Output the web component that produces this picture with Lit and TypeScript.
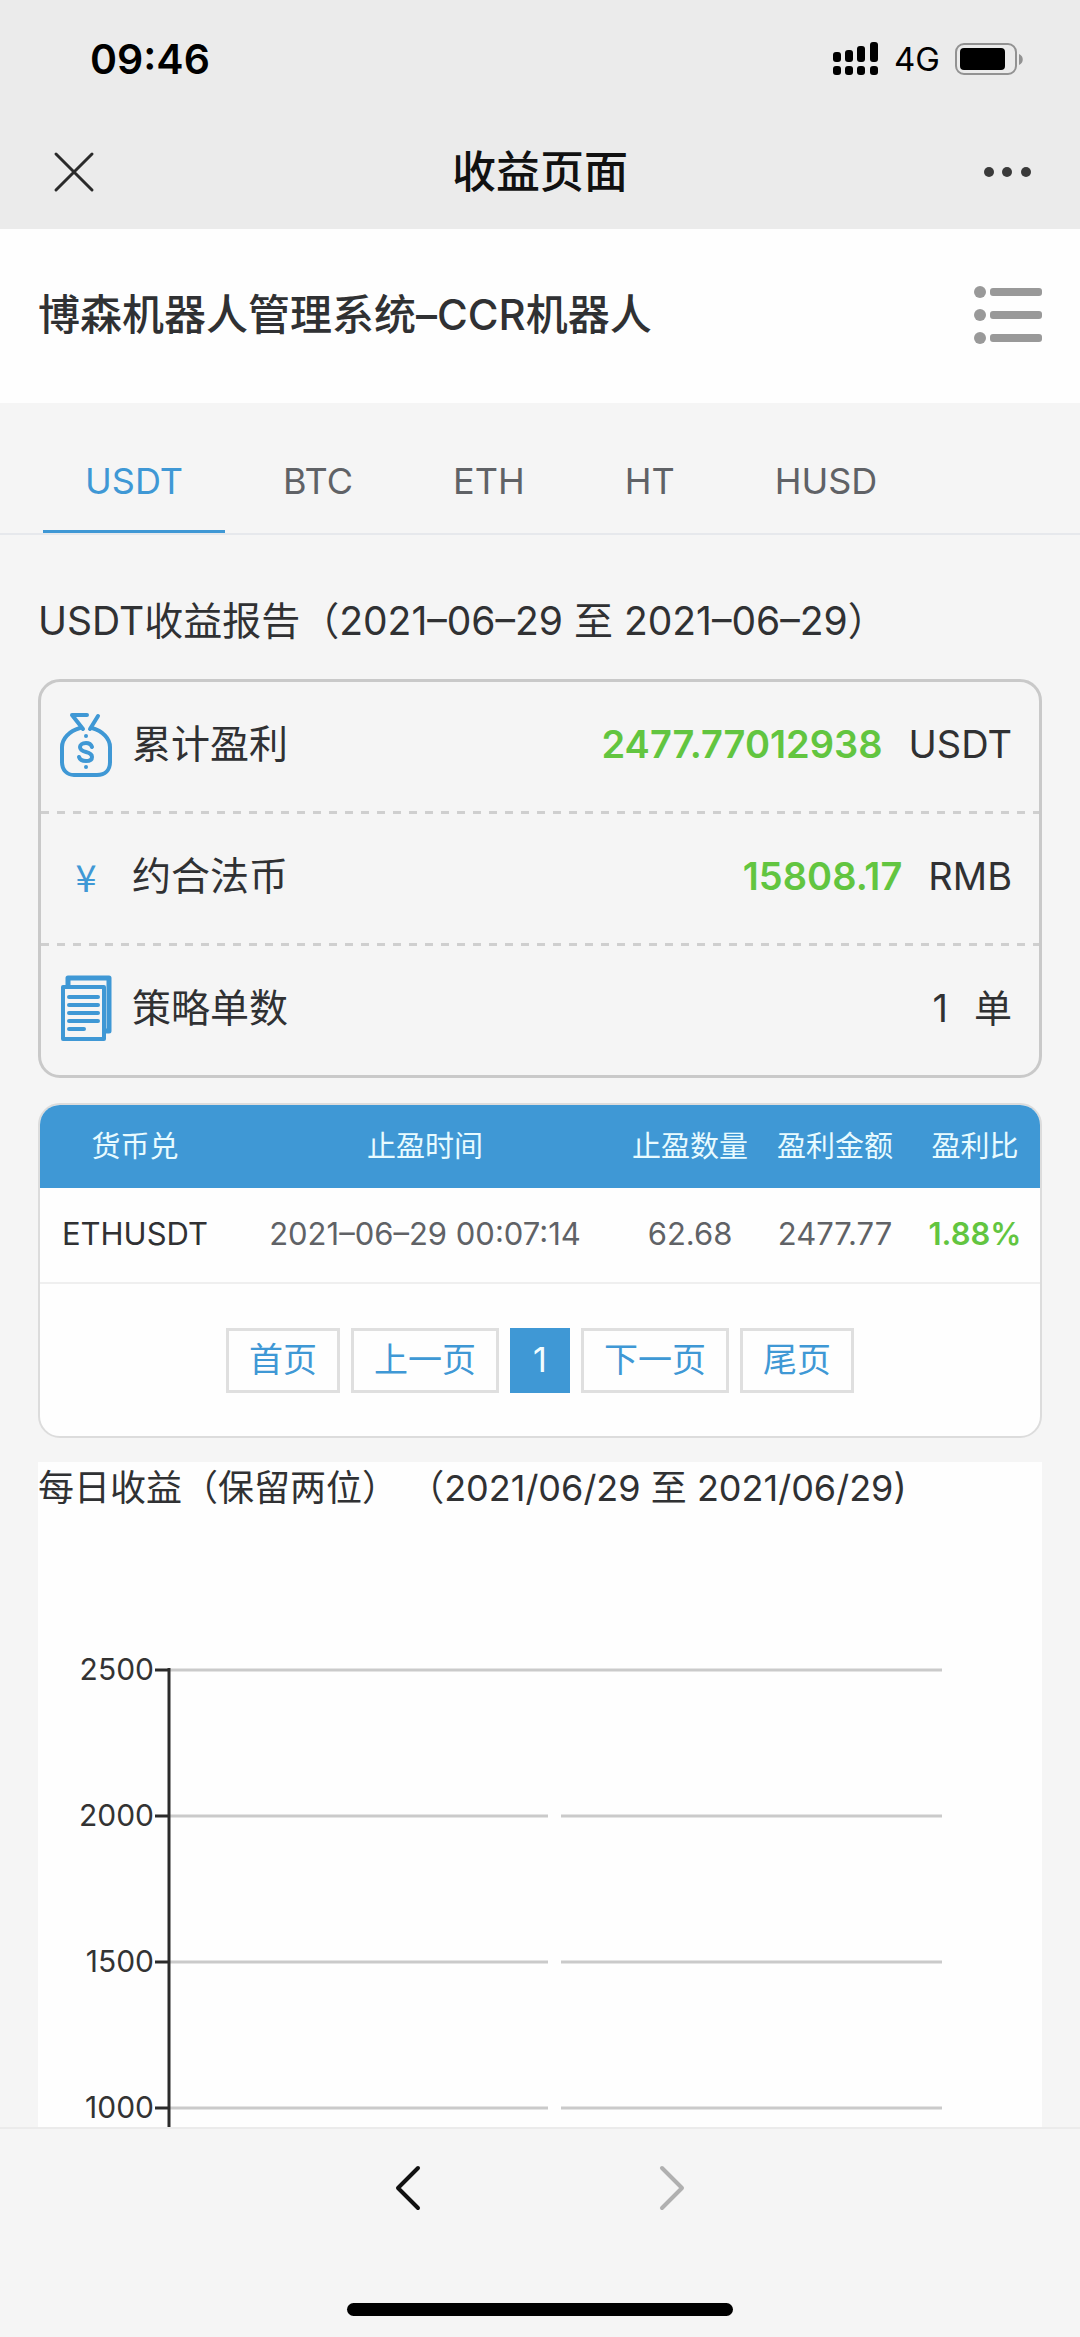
import { LitElement, html, css, svg } from "lit";
import { customElement, state } from "lit/decorators.js";
import { classMap } from "lit/directives/class-map.js";

const COINS = ["USDT", "BTC", "ETH", "HT", "HUSD"];

const bagIcon = svg`
  <svg class="icon" viewBox="0 0 52 66" width="52" height="66" fill="none" stroke="currentColor" stroke-width="4" stroke-linecap="round" stroke-linejoin="round">
    <path d="M27 4H12L23 18M38 5L30 18" />
    <path d="M20 17C9 20 2 28 2 36V51C2 59 7 64 14 64H37C45 64 50 59 50 51V36C50 28 43 20 32 17" />
    <path d="M32 36C31 33 29 32 26 32C22 32 20 34 20 36C20 39 22 40 26 41C30 42 32 43 32 46C32 49 30 50 26 50C22 50 20 49 19 46" />
    <circle cx="26" cy="25" r="2" fill="currentColor" stroke="none" />
    <circle cx="26" cy="56" r="2" fill="currentColor" stroke="none" />
  </svg>`;

const docIcon = svg`
  <svg class="icon" viewBox="0 0 52 66" width="52" height="66" fill="none" stroke="currentColor" stroke-width="4" stroke-linecap="round" stroke-linejoin="round">
    <path d="M8 10V3H49V56H45" stroke-width="5" />
    <rect x="3" y="12" width="41" height="52" />
    <path d="M9 22H38M9 30H38M9 38H38M9 46H38M9 54H24" />
  </svg>`;

@customElement("app-root")
export class AppRoot extends LitElement {
  @state() private coin = "USDT";

  static styles = css`
    :host {
      display: flex;
      flex-direction: column;
      height: 100vh;
      overflow: hidden;
      background: #f5f5f5;
      color: #303133;
      font-family: Inter, "Noto Sans CJK SC", sans-serif;
      font-weight: 400;
      font-size: 38px;
      line-height: 56px;
      --blue: #3f98d5;
      --green: #62c540;
      --line: #c9c9c9;
    }
    *, *::before { box-sizing: border-box; }
    button, a {
      font: inherit;
      color: inherit;
      background: none;
      border: 0;
      padding: 0;
      margin: 0;
      text-decoration: none;
    }
    svg { display: block; flex: none; }
    h1, h2, h3, p { margin: 0; font-weight: inherit; font-size: inherit; }

    .top { background: #ebebeb; color: #111; }
    .status {
      display: flex;
      align-items: center;
      justify-content: space-between;
      height: 118px;
      padding: 0 56px 0 90px;
    }
    .time { font-size: 41px; font-weight: 600; color: #000; }
    .signals { display: flex; align-items: center; color: #000; }
    .network { font-size: 33px; padding: 0 15px; }
    .nav {
      display: grid;
      grid-template-columns: 1fr auto 1fr;
      align-items: center;
      height: 111px;
      padding: 0 49px 4px;
    }
    .nav-title { font-size: 44px; font-weight: 500; }
    .more { justify-self: end; }
    .close { justify-self: start; }

    .page { flex: 1; min-height: 0; overflow: hidden; }
    .head {
      display: flex;
      align-items: center;
      justify-content: space-between;
      height: 174px;
      padding: 0 38px 2px;
      background: #fefefe;
    }
    .head-title { font-size: 42px; font-weight: 500; }

    .tabs {
      display: flex;
      gap: 16px;
      height: 132px;
      padding: 0 43px;
      border-bottom: 2px solid #e6e8ec;
      font-size: 36px;
      color: #606266;
    }
    .tab { padding: 28px 42px 0; border-bottom: 3px solid transparent; }
    .tab.on { color: var(--blue); border-color: var(--blue); }

    .body { padding: 58px 38px 0; }
    .report { padding: 0 0 30px; font-size: 39px; }

    .summary { border: 3px solid var(--line); border-radius: 22px; }
    .stat {
      display: flex;
      align-items: center;
      height: 129px;
      padding: 0 27px 6px 19px;
    }
    .rule {
      height: 3px;
      background: repeating-linear-gradient(90deg, #cfcfcf 0 8px, transparent 8px 16px);
    }
    .icon, .yen { width: 52px; margin-right: 20px; color: var(--blue); text-align: center; }
    .yen { font-family: "Noto Sans CJK SC", sans-serif; }
    .stat-name { flex: 1; font-size: 39px; }
    .amount { color: var(--green); font-weight: 600; }
    .unit { margin-left: 26px; }

    .orders {
      margin-top: 25px;
      border: 2px solid #dcdcdc;
      border-radius: 22px;
      background: #fefefe;
      overflow: hidden;
    }
    .grid { width: 100%; border-collapse: collapse; table-layout: fixed; font-size: 31px; }
    .grid th { height: 83px; padding: 0; background: var(--blue); color: #e8fbff; font-size: 29px; font-weight: 400; }
    .grid td { height: 95px; padding: 0 0 2px; text-align: center; color: #606266; border-bottom: 2px solid #efefef; }
    .grid .pair { color: #303133; }
    .grid .ratio { color: var(--green); font-weight: 600; }
    .w-pair { width: 19%; }
    .w-time { width: 39%; }
    .w-qty { width: 14%; }
    .w-sum { width: 15%; }
    .w-ratio { width: 13%; }

    .pager { display: flex; justify-content: center; gap: 11px; padding: 44px 0 43px; font-size: 34px; color: var(--blue); }
    .pg { height: 65px; padding: 0 20px; border: 3px solid #dfdfdf; line-height: 58px; }
    .pg.on { background: var(--blue); border-color: var(--blue); color: #f2fdff; }

    .daily { margin-top: 24px; background: #fefefe; font-size: 36px; line-height: 52px; }
    .chart { width: 100%; height: auto; }
    .chart text { font-size: 30px; fill: #333; text-anchor: end; }
    .gridline { stroke: #cacaca; stroke-width: 3; }
    .axis { stroke: #2b2b2b; stroke-width: 3; }
    .bar { fill: #fefefe; }

    .bottom {
      display: flex;
      flex-direction: column;
      align-items: center;
      justify-content: space-between;
      height: 210px;
      padding: 15px 0 21px;
      background: #f5f5f5;
      border-top: 2px solid #ebebeb;
    }
    .moves { display: flex; gap: 176px; }
    .move { display: grid; place-items: center; width: 88px; height: 88px; color: #111; }
    .move:disabled { color: #b0b0b0; }
    .home { width: 386px; height: 13px; border-radius: 7px; background: #000; }
  `;

  private renderChart() {
    const ticks = [2500, 2000, 1500, 1000];
    return html`
      <svg class="chart" viewBox="0 0 1004 640" role="img" aria-label="每日收益">
        ${ticks.map((v, i) => {
          const y = 156 + i * 146;
          return svg`
            <line class="gridline" x1="132" x2="904" y1=${y} y2=${y} />
            <line class="axis" x1="117" x2="131" y1=${y} y2=${y} />
            <text x="116" y=${y + 10}>${v}</text>`;
        })}
        <rect class="bar" x="510" y="163" width="13" height="723" />
        <line class="axis" x1="131" x2="131" y1="154" y2="888" />
      </svg>`;
  }

  render() {
    return html`
      <header class="top">
        <div class="status">
          <span class="time">09:46</span>
          <div class="signals">
            <svg width="46" height="34" viewBox="0 0 46 34" fill="currentColor">
              <rect x="0" y="10" width="8" height="10" rx="3" />
              <rect x="12" y="8" width="8" height="12" rx="3" />
              <rect x="24" y="4" width="8" height="16" rx="3" />
              <rect x="37" y="0" width="8" height="20" rx="3" />
              <rect x="0" y="24" width="8" height="9" rx="3" />
              <rect x="12" y="24" width="8" height="9" rx="3" />
              <rect x="24" y="24" width="8" height="9" rx="3" />
              <rect x="37" y="24" width="8" height="9" rx="3" />
            </svg>
            <span class="network">4G</span>
            <svg width="69" height="34" viewBox="0 0 69 34">
              <rect x="1" y="2" width="60" height="30" rx="8" fill="none" stroke="#929292" stroke-width="2" />
              <rect x="5" y="6" width="45" height="22" rx="4" fill="#000" />
              <path d="M64 12C69 14 69 21 64 23Z" fill="#929292" />
            </svg>
          </div>
        </div>
        <div class="nav">
          <button class="close" aria-label="关闭">
            <svg width="48" height="48" viewBox="0 0 48 48" stroke="#2a2a2a" stroke-width="3" stroke-linecap="round">
              <path d="M7 6L43 42M43 6L7 42" />
            </svg>
          </button>
          <h1 class="nav-title">收益页面</h1>
          <button class="more" aria-label="更多">
            <svg width="48" height="48" viewBox="0 0 48 48" fill="#3a3a3a">
              <circle cx="6" cy="24" r="5" /><circle cx="24" cy="24" r="5" /><circle cx="43" cy="24" r="5" />
            </svg>
          </button>
        </div>
      </header>

      <main class="page">
        <div class="head">
          <h2 class="head-title">博森机器人管理系统–CCR机器人</h2>
          <button aria-label="菜单">
            <svg width="68" height="58" viewBox="0 0 68 58" fill="#999">
              <circle cx="6" cy="6" r="6" /><rect x="16" y="2" width="52" height="8" rx="3" />
              <circle cx="6" cy="29" r="6" /><rect x="16" y="25" width="52" height="8" rx="3" />
              <circle cx="6" cy="52" r="6" /><rect x="16" y="48" width="52" height="8" rx="3" />
            </svg>
          </button>
        </div>

        <div class="tabs" role="tablist">
          ${COINS.map(
            (c) => html`<button
              role="tab"
              aria-selected=${c === this.coin}
              class=${classMap({ tab: true, on: c === this.coin })}
              @click=${() => (this.coin = c)}
            >${c}</button>`
          )}
        </div>

        <div class="body">
          <h3 class="report">USDT收益报告（2021–06–29 至 2021–06–29）</h3>

          <section class="summary">
            <div class="stat">
              ${bagIcon}<span class="stat-name">累计盈利</span>
              <span class="amount">2477.77012938</span><span class="unit">USDT</span>
            </div>
            <div class="rule"></div>
            <div class="stat">
              <span class="yen">¥</span><span class="stat-name">约合法币</span>
              <span class="amount">15808.17</span><span class="unit">RMB</span>
            </div>
            <div class="rule"></div>
            <div class="stat">
              ${docIcon}<span class="stat-name">策略单数</span>
              <span>1</span><span class="unit">单</span>
            </div>
          </section>

          <section class="orders">
            <table class="grid">
              <thead>
                <tr>
                  <th class="w-pair">货币兑</th>
                  <th class="w-time">止盈时间</th>
                  <th class="w-qty">止盈数量</th>
                  <th class="w-sum">盈利金额</th>
                  <th class="w-ratio">盈利比</th>
                </tr>
              </thead>
              <tbody>
                <tr>
                  <td class="pair">ETHUSDT</td>
                  <td>2021–06–29 00:07:14</td>
                  <td>62.68</td>
                  <td>2477.77</td>
                  <td class="ratio">1.88%</td>
                </tr>
              </tbody>
            </table>
            <nav class="pager">
              <a class="pg" href="#first">首页</a>
              <a class="pg" href="#prev">上一页</a>
              <a class="pg on" href="#1" aria-current="page">1</a>
              <a class="pg" href="#next">下一页</a>
              <a class="pg" href="#last">尾页</a>
            </nav>
          </section>

          <section class="daily">
            <h3>每日收益（保留两位） （2021/06/29 至 2021/06/29)</h3>
            ${this.renderChart()}
          </section>
        </div>
      </main>

      <footer class="bottom">
        <div class="moves">
          <button class="move" aria-label="后退">
            <svg width="28" height="48" viewBox="0 0 28 48" fill="none" stroke="currentColor" stroke-width="4" stroke-linecap="round" stroke-linejoin="round">
              <path d="M24 4L4 24L24 44" />
            </svg>
          </button>
          <button class="move" aria-label="前进" disabled>
            <svg width="28" height="48" viewBox="0 0 28 48" fill="none" stroke="currentColor" stroke-width="4" stroke-linecap="round" stroke-linejoin="round">
              <path d="M4 4L24 24L4 44" />
            </svg>
          </button>
        </div>
        <div class="home"></div>
      </footer>
    `;
  }
}
